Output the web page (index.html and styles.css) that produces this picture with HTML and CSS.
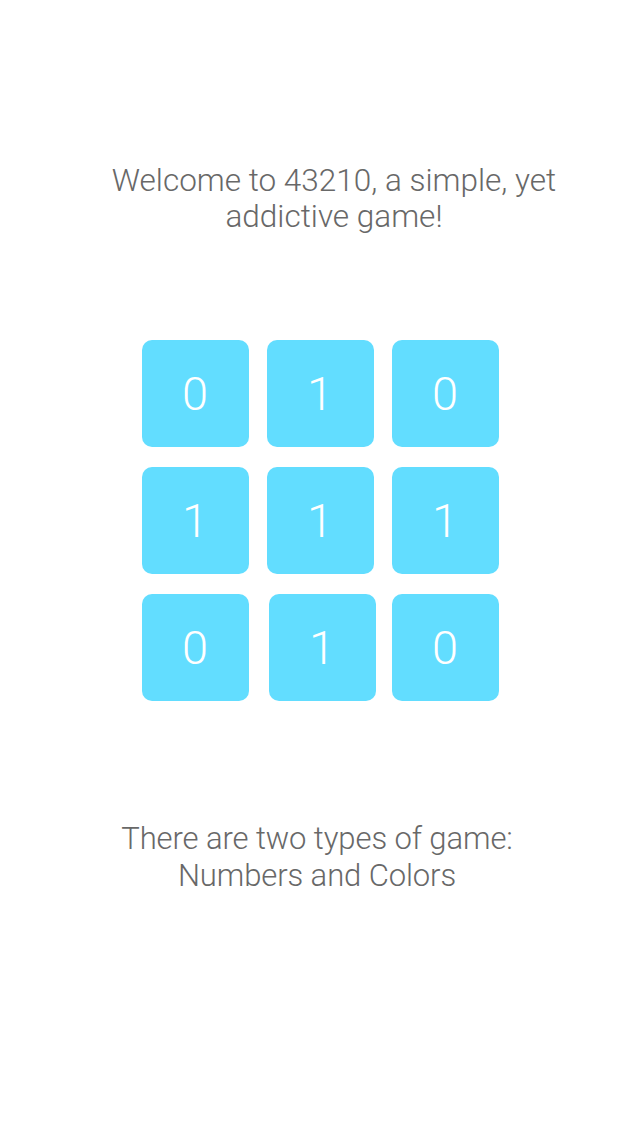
FILE: index.html
```html
<!DOCTYPE html>
<html lang="en">
<head>
<meta charset="utf-8">
<title>43210</title>
<link rel="stylesheet" href="styles.css">
</head>
<body>
<main class="screen">
  <p class="intro">Welcome to 43210, a simple, yet<br>addictive game!</p>
  <div class="board">
    <div class="tile">0</div>
    <div class="tile">1</div>
    <div class="tile">0</div>
    <div class="tile">1</div>
    <div class="tile">1</div>
    <div class="tile">1</div>
    <div class="tile">0</div>
    <div class="tile tile-shift">1</div>
    <div class="tile">0</div>
  </div>
  <p class="outro">There are two types of game:<br>Numbers and Colors</p>
</main>
</body>
</html>
```

FILE: styles.css
```css
html, body {
  margin: 0;
  padding: 0;
  background: #ffffff;
}

.screen {
  width: 640px;
  height: 1136px;
  display: flex;
  flex-direction: column;
  align-items: center;
  font-family: Roboto, "Helvetica Neue", "Liberation Sans", sans-serif;
  font-weight: 300;
  color: #686868;
  box-sizing: border-box;
  padding-top: 163px;
}

.intro {
  margin: 0 0 0 28px;
  font-size: 31.5px;
  line-height: 36px;
  text-align: center;
  letter-spacing: 0;
}

.board {
  margin-top: 105px;
  display: grid;
  grid-template-columns: repeat(3, 107px);
  grid-auto-rows: 107px;
  column-gap: 18px;
  row-gap: 20px;
}

.tile {
  background: #62ddff;
  border-radius: 10px;
  color: #ffffff;
  font-size: 47px;
  font-weight: 300;
  display: flex;
  align-items: center;
  justify-content: center;
}

.tile-shift {
  margin-left: 2px;
  margin-right: -2px;
}

.outro {
  margin: 119px 6px 0 0;
  font-size: 31px;
  line-height: 37px;
  text-align: center;
  letter-spacing: -0.1px;
}
```
